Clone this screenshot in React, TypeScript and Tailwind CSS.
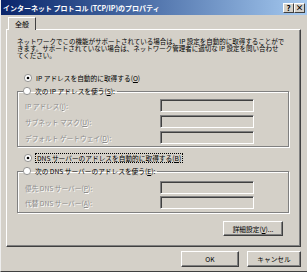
import React from 'react';

const font = { fontFamily: '"Noto Sans CJK JP", "Noto Sans", sans-serif' };

const Radio = ({ checked }: { checked?: boolean }) => (
  <svg width="8" height="8" viewBox="0 0 8 8" className="shrink-0">
    <circle cx="4" cy="4" r="3.6" fill="#fff" stroke="#808080" strokeWidth="0.8" />
    {checked && <circle cx="4" cy="4" r="1.3" fill="#000" />}
  </svg>
);

const Field = () => (
  <div className="w-[94px] h-[13px] bg-[#d4d0c8] border border-t-[#808080] border-l-[#808080] border-b-white border-r-white shadow-[inset_1px_1px_0_#404040,inset_-1px_-1px_0_#d4d0c8]" />
);

const Label = ({ children }: { children: React.ReactNode }) => (
  <span className="w-[135px] text-[6.7px] leading-[8px] text-[#8c8c8c] [text-shadow:1px_1px_0_#fff] whitespace-nowrap">
    {children}
  </span>
);

const Btn = ({ children, className }: { children: React.ReactNode; className: string }) => (
  <div
    className={`flex items-center justify-center bg-[#d4d0c8] border border-t-white border-l-white border-b-[#404040] border-r-[#404040] shadow-[inset_-1px_-1px_0_#808080] text-[6.7px] leading-[8px] text-black ${className}`}
  >
    {children}
  </div>
);

export default function App() {
  return (
    <div
      style={font}
      className="w-[307px] h-[272px] bg-[#d4d0c8] border-b border-[#404040] border-l border-l-[#eeeeee] overflow-hidden select-none"
    >
      {/* Title bar */}
      <div className="h-[15px] flex items-center justify-between pl-[2px] pr-[2px] bg-gradient-to-r from-[#0a246a] to-[#a6caf0]">
        <span className="text-[7px] leading-[8px] font-bold text-white whitespace-nowrap">
          インターネット プロトコル (TCP/IP)のプロパティ
        </span>
        <div className="flex">
          <div className="w-[11px] h-[10px] flex items-center justify-center bg-[#d4d0c8] border border-t-white border-l-white border-b-[#404040] border-r-[#404040] text-[8px] leading-[8px] font-bold text-black">
            ?
          </div>
          <div className="w-[11px] h-[10px] flex items-center justify-center bg-[#d4d0c8] border border-t-white border-l-white border-b-[#404040] border-r-[#404040] text-[8px] leading-[8px] font-bold text-black">
            ×
          </div>
        </div>
      </div>

      <div className="pl-[5px] pt-[2px]">
        {/* Tab */}
        <div className="ml-[2px] w-[28px] h-[13px] flex items-center justify-center border-t border-l border-white border-r border-r-[#404040] text-[7px] leading-[8px] text-black relative z-10 bg-[#d4d0c8]">
          全般
        </div>

        {/* Panel */}
        <div className="w-[295px] h-[218px] -mt-px border border-t-white border-l-white border-b-[#404040] border-r-[#404040] shadow-[inset_-1px_-1px_0_#808080] pl-[10px] pt-[8px]">
          <p className="text-[6.5px] leading-[7px] text-black whitespace-nowrap">
            ネットワークでこの機能がサポートされている場合は、IP 設定を自動的に取得することがで
            <br />
            きます。サポートされていない場合は、ネットワーク管理者に適切な IP 設定を問い合わせ
            <br />
            てください。
          </p>

          <div className="mt-[14px] ml-[7px] h-[10px] flex items-center gap-[4px] text-[6.7px] leading-[8px] text-black whitespace-nowrap">
            <Radio checked />
            <span>IP アドレスを自動的に取得する(<u>O</u>)</span>
          </div>

          <fieldset className="mt-[3px] w-[272px] border border-[#808080] shadow-[inset_1px_1px_0_#fff,1px_1px_0_#fff] pl-[7px] pb-[2px]">
            <legend className="-ml-[2px] h-[10px] pr-[2px] flex items-center gap-[4px] text-[6.7px] leading-[8px] text-black whitespace-nowrap">
              <Radio />
              <span>次の IP アドレスを使う(<u>S</u>):</span>
            </legend>
            <div className="pt-[3px] flex flex-col gap-[3px]">
              <div className="flex items-center">
                <Label>IP アドレス(<u>I</u>):</Label>
                <Field />
              </div>
              <div className="flex items-center">
                <Label>サブネット マスク(<u>U</u>):</Label>
                <Field />
              </div>
              <div className="flex items-center">
                <Label>デフォルト ゲートウェイ(<u>D</u>):</Label>
                <Field />
              </div>
            </div>
          </fieldset>

          <div className="mt-[6px] ml-[7px] h-[10px] flex items-center gap-[4px] text-[6.7px] leading-[8px] text-black whitespace-nowrap">
            <Radio checked />
            <span className="outline outline-1 outline-dotted outline-black px-px">
              DNS サーバーのアドレスを自動的に取得する(<u>B</u>)
            </span>
          </div>

          <fieldset className="mt-[3px] w-[272px] border border-[#808080] shadow-[inset_1px_1px_0_#fff,1px_1px_0_#fff] pl-[7px] pb-[3px]">
            <legend className="-ml-[2px] h-[10px] pr-[2px] flex items-center gap-[4px] text-[6.7px] leading-[8px] text-black whitespace-nowrap">
              <Radio />
              <span>次の DNS サーバーのアドレスを使う(<u>E</u>):</span>
            </legend>
            <div className="pt-[5px] flex flex-col gap-[2px]">
              <div className="flex items-center">
                <Label>優先 DNS サーバー(<u>P</u>):</Label>
                <Field />
              </div>
              <div className="flex items-center">
                <Label>代替 DNS サーバー(<u>A</u>):</Label>
                <Field />
              </div>
            </div>
          </fieldset>

          <div className="mt-[8px] flex justify-end pr-[17px]">
            <Btn className="w-[60px] h-[15px]">詳細設定(<u>V</u>)...</Btn>
          </div>
        </div>

        {/* Footer */}
        <div className="mt-[4px] w-[295px] flex justify-end gap-[8px]">
          <Btn className="w-[58px] h-[16px]">OK</Btn>
          <Btn className="w-[54px] h-[16px]">キャンセル</Btn>
        </div>
      </div>
    </div>
  );
}
